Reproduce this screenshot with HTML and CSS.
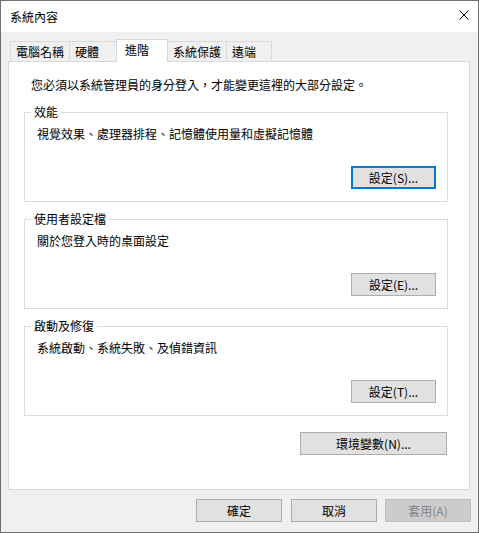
FILE: index.html
```html
<!DOCTYPE html>
<html lang="zh-Hant">
<head>
<meta charset="utf-8">
<title>系統內容</title>
<link rel="stylesheet" href="styles.css">
</head>
<body>
<div class="window">
  <div class="titlebar">
    <span class="title">系統內容</span>
    <span class="close" aria-label="關閉">
      <svg width="10" height="10" viewBox="0 0 10 10"><path d="M0.5 0.5L9.5 9.5M9.5 0.5L0.5 9.5" stroke="#000" stroke-width="1" fill="none"/></svg>
    </span>
  </div>
  <div class="content">
    <div class="tabs">
      <div class="tab t1">電腦名稱</div>
      <div class="tab t2">硬體</div>
      <div class="tab active">進階</div>
      <div class="tab t4">系統保護</div>
      <div class="tab t5">遠端</div>
    </div>
    <div class="panel">
      <p class="note">您必須以系統管理員的身分登入，才能變更這裡的大部分設定。</p>
      <fieldset class="group">
        <legend>效能</legend>
        <p class="desc">視覺效果、處理器排程、記憶體使用量和虛擬記憶體</p>
        <div class="actions"><button class="btn focus">設定(S)...</button></div>
      </fieldset>
      <fieldset class="group">
        <legend>使用者設定檔</legend>
        <p class="desc">關於您登入時的桌面設定</p>
        <div class="actions"><button class="btn">設定(E)...</button></div>
      </fieldset>
      <fieldset class="group">
        <legend>啟動及修復</legend>
        <p class="desc">系統啟動、系統失敗、及偵錯資訊</p>
        <div class="actions"><button class="btn">設定(T)...</button></div>
      </fieldset>
      <div class="env-row"><button class="btn wide">環境變數(N)...</button></div>
    </div>
    <div class="footer">
      <button class="btn ok">確定</button>
      <button class="btn">取消</button>
      <button class="btn" disabled>套用(A)</button>
    </div>
  </div>
</div>
</body>
</html>
```
FILE: styles.css
```css
html, body {
  margin: 0;
  padding: 0;
  background: #ffffff;
}

body {
  font-family: "Noto Sans CJK TC", "Noto Sans", sans-serif;
  font-size: 12px;
  line-height: 16px;
  color: #000;
}

.window {
  width: 479px;
  height: 533px;
  box-sizing: border-box;
  border: 1px solid #707070;
  background: #f0f0f0;
  display: flex;
  flex-direction: column;
}

.titlebar {
  height: 31px;
  background: #ffffff;
  display: flex;
  align-items: flex-start;
  justify-content: space-between;
  padding: 0 9px 0 9px;
  flex-shrink: 0;
}

.title {
  margin-top: 8px;
  line-height: 16px;
}

.close {
  margin-top: 9px;
  width: 10px;
  height: 10px;
  display: block;
}

.close svg {
  display: block;
}

.content {
  flex: 1;
  display: flex;
  flex-direction: column;
}

.tabs {
  display: flex;
  align-items: flex-end;
  height: 22px;
  margin: 7px 0 0 9px;
  position: relative;
  z-index: 1;
}

.tab {
  box-sizing: border-box;
  height: 20px;
  background: #f0f0f0;
  border-top: 1px solid #d9d9d9;
  border-left: 1px solid #d9d9d9;
  padding: 2px 0 0 5px;
  line-height: 16px;
  white-space: nowrap;
}

.t1 { width: 59px; }
.t2 { width: 47px; }

.tab.active {
  width: 52px;
  height: 23px;
  margin-bottom: -1px;
  background: #ffffff;
  border-right: 1px solid #d9d9d9;
  padding: 2px 0 0 8px;
}

.t4 {
  width: 59px;
  border-left: none;
  border-right: 1px solid #d9d9d9;
}

.t5 {
  width: 45px;
  border-left: none;
  border-right: 1px solid #d9d9d9;
}

.panel {
  box-sizing: border-box;
  width: 462px;
  height: 429px;
  margin-left: 7px;
  background: #ffffff;
  border: 1px solid #d9d9d9;
  padding: 15px 0 0 15px;
}

.note {
  margin: 0 0 0 7px;
}

.group {
  box-sizing: border-box;
  width: 424px;
  margin: 11px 0 0 0;
  padding: 6px 0 12px 0;
  border: 1px solid #dcdcdc;
  min-inline-size: 0;
}

.group + .group {
  margin-top: 9px;
}

.group legend {
  margin-left: 6px;
  padding: 0 3px;
  line-height: 16px;
}

.desc {
  margin: 0 0 0 12px;
}

.actions {
  display: flex;
  justify-content: flex-end;
  margin-top: 24px;
  padding-right: 11px;
}

.btn {
  box-sizing: border-box;
  width: 85px;
  height: 23px;
  margin: 0;
  padding: 0;
  background: #e1e1e1;
  border: 1px solid #adadad;
  border-radius: 0;
  font-family: "Noto Sans CJK TC", "Noto Sans", sans-serif;
  font-size: 12px;
  line-height: 19px;
  color: #000;
}

.btn.focus {
  border: 2px solid #0078d7;
}

.btn:disabled {
  background: #cccccc;
  border-color: #bfbfbf;
  color: #838383;
}

.env-row {
  width: 424px;
  display: flex;
  justify-content: flex-end;
  margin-top: 16px;
}

.btn.wide {
  width: 147px;
  margin-right: 1px;
}

.footer {
  display: flex;
  justify-content: flex-end;
  gap: 8px;
  margin-top: 9px;
  padding-right: 7px;
}

.footer .btn {
  width: 86px;
}

.footer .btn.ok {
  margin-right: 1px;
}
```
